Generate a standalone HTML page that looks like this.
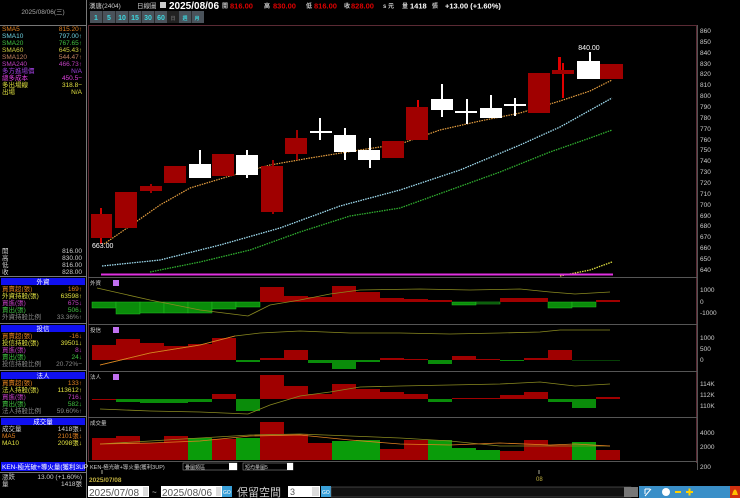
<!DOCTYPE html>
<html><head><meta charset="utf-8"><style>
body{margin:0;background:#000;width:740px;height:498px;overflow:hidden;font-family:"Liberation Sans","Noto Sans CJK TC",sans-serif;}
svg{position:absolute;left:0;top:0}
text{font-family:"Liberation Sans","Noto Sans CJK TC",sans-serif;}
.s{font-size:6.5px}
</style></head><body>
<svg width="740" height="498" viewBox="0 0 740 498">
<rect x="0" y="0" width="86" height="498" fill="#000"/>
<line x1="86.5" y1="0" x2="86.5" y2="498" stroke="#777"/>
<line x1="0" y1="25.5" x2="86" y2="25.5" stroke="#777"/>
<text x="43" y="14" fill="#aaa" class="s" text-anchor="middle">2025/08/06(三)</text>
<g class="s">
<text x="2" y="31" fill="#e08020">SMA5</text><text x="82" y="31" fill="#e08020" text-anchor="end">815.20↑</text>
<text x="2" y="38" fill="#6cd0e0">SMA10</text><text x="82" y="38" fill="#6cd0e0" text-anchor="end">797.00↑</text>
<text x="2" y="45" fill="#40c040">SMA20</text><text x="82" y="45" fill="#40c040" text-anchor="end">767.65↑</text>
<text x="2" y="52" fill="#d0d040">SMA60</text><text x="82" y="52" fill="#d0d040" text-anchor="end">645.43↑</text>
<text x="2" y="59" fill="#c08060">SMA120</text><text x="82" y="59" fill="#c08060" text-anchor="end">544.47↑</text>
<text x="2" y="66" fill="#c040c0">SMA240</text><text x="82" y="66" fill="#c040c0" text-anchor="end">466.73↑</text>
<text x="2" y="73" fill="#a040e0">多方進場價</text><text x="82" y="73" fill="#a040e0" text-anchor="end">N/A</text>
<text x="2" y="80" fill="#e040e0">總多成本</text><text x="82" y="80" fill="#e040e0" text-anchor="end">450.5−</text>
<text x="2" y="87" fill="#e0e040">多出場線</text><text x="82" y="87" fill="#e0e040" text-anchor="end">318.8−</text>
<text x="2" y="94" fill="#e0e040">出場</text><text x="82" y="94" fill="#e0e040" text-anchor="end">N/A</text>
<g fill="#ccc"><text x="2" y="253">開</text><text x="82" y="253" text-anchor="end">816.00</text>
<text x="2" y="260">高</text><text x="82" y="260" text-anchor="end">830.00</text>
<text x="2" y="267">低</text><text x="82" y="267" text-anchor="end">816.00</text>
<text x="2" y="274">收</text><text x="82" y="274" text-anchor="end">828.00</text></g>
<line x1="0" y1="276.5" x2="86" y2="276.5" stroke="#777"/>
<rect x="1" y="278" width="84" height="7" fill="#1010f0"/><text x="43" y="284" fill="#fff" text-anchor="middle">外資</text>
<text x="2" y="291" fill="#e08020">買賣超(張)</text><text x="82" y="291" fill="#e08020" text-anchor="end">169↑</text>
<text x="2" y="298" fill="#e0e040">外資持股(張)</text><text x="82" y="298" fill="#e0e040" text-anchor="end">63598↑</text>
<text x="2" y="305" fill="#c040c0">買進(張)</text><text x="82" y="305" fill="#c040c0" text-anchor="end">675↓</text>
<text x="2" y="312" fill="#40c040">賣出(張)</text><text x="82" y="312" fill="#40c040" text-anchor="end">506↓</text>
<text x="2" y="319" fill="#888">外資持股比例</text><text x="82" y="319" fill="#888" text-anchor="end">33.36%↑</text>
<line x1="0" y1="323.5" x2="86" y2="323.5" stroke="#777"/>
<rect x="1" y="325" width="84" height="7" fill="#1010f0"/><text x="43" y="331" fill="#fff" text-anchor="middle">投信</text>
<text x="2" y="338" fill="#e08020">買賣超(張)</text><text x="82" y="338" fill="#e08020" text-anchor="end">-16↓</text>
<text x="2" y="345" fill="#e0e040">投信持股(張)</text><text x="82" y="345" fill="#e0e040" text-anchor="end">39501↓</text>
<text x="2" y="352" fill="#c040c0">買進(張)</text><text x="82" y="352" fill="#c040c0" text-anchor="end">8↓</text>
<text x="2" y="359" fill="#40c040">賣出(張)</text><text x="82" y="359" fill="#40c040" text-anchor="end">24↓</text>
<text x="2" y="366" fill="#888">投信持股比例</text><text x="82" y="366" fill="#888" text-anchor="end">20.72%−</text>
<line x1="0" y1="370.5" x2="86" y2="370.5" stroke="#777"/>
<rect x="1" y="372" width="84" height="7" fill="#1010f0"/><text x="43" y="378" fill="#fff" text-anchor="middle">法人</text>
<text x="2" y="385" fill="#e08020">買賣超(張)</text><text x="82" y="385" fill="#e08020" text-anchor="end">133↑</text>
<text x="2" y="392" fill="#e0e040">法人持股(張)</text><text x="82" y="392" fill="#e0e040" text-anchor="end">113612↑</text>
<text x="2" y="399" fill="#c040c0">買進(張)</text><text x="82" y="399" fill="#c040c0" text-anchor="end">716↓</text>
<text x="2" y="406" fill="#40c040">賣出(張)</text><text x="82" y="406" fill="#40c040" text-anchor="end">582↓</text>
<text x="2" y="413" fill="#888">法人持股比例</text><text x="82" y="413" fill="#888" text-anchor="end">59.60%↑</text>
<line x1="0" y1="416.5" x2="86" y2="416.5" stroke="#777"/>
<rect x="1" y="418" width="84" height="7" fill="#1010f0"/><text x="43" y="424" fill="#fff" text-anchor="middle">成交量</text>
<text x="2" y="431" fill="#ccc">成交量</text><text x="82" y="431" fill="#ccc" text-anchor="end">1418張↓</text>
<text x="2" y="438" fill="#e08020">MA5</text><text x="82" y="438" fill="#e08020" text-anchor="end">2101張↓</text>
<text x="2" y="445" fill="#e0e040">MA10</text><text x="82" y="445" fill="#e0e040" text-anchor="end">2098張↓</text>
<rect x="1" y="462" width="84" height="9" fill="#1010f0"/><text x="2" y="469" fill="#fff">KEN-極光破+導火量(獲利3UP)</text>
<line x1="0" y1="472.5" x2="86" y2="472.5" stroke="#777"/>
<text x="2" y="479" fill="#ccc">漲跌</text><text x="82" y="479" fill="#ccc" text-anchor="end">13.00 (+1.60%)</text>
<text x="2" y="486" fill="#ccc">量</text><text x="82" y="486" fill="#ccc" text-anchor="end">1418張</text>
</g>

<g class="s">
<text x="89" y="8" fill="#ccc">漢唐(2404)</text>
<text x="137" y="8" fill="#ccc">日線圖</text>
<rect x="160" y="2" width="6" height="6" fill="#ccc"/>
</g>
<text x="169" y="9" fill="#fff" font-size="10" font-weight="bold">2025/08/06</text>
<g font-size="6" font-weight="bold">
<text x="222" y="8" fill="#ccc">開</text><text x="230" y="8.5" fill="#e00000" font-size="7.5">816.00</text>
<text x="264" y="8" fill="#ccc">高</text><text x="273" y="8.5" fill="#e00000" font-size="7.5">830.00</text>
<text x="306" y="8" fill="#ccc">低</text><text x="314" y="8.5" fill="#e00000" font-size="7.5">816.00</text>
<text x="344" y="8" fill="#ccc">收</text><text x="351" y="8.5" fill="#e00000" font-size="7.5">828.00</text>
<text x="383" y="8" fill="#ccc">s 元</text><text x="402" y="8" fill="#ccc">量</text>
<text x="410" y="8.5" fill="#fff" font-size="7.5">1418</text><text x="432" y="8" fill="#ccc">張</text>
<text x="445" y="8.5" fill="#fff" font-size="7.5">+13.00 (+1.60%)</text>
</g>
<g font-size="7" font-weight="bold" fill="#3cd8e0">
<rect x="90" y="11" width="114" height="12" fill="#4a525a"/>
<rect x="167" y="11" width="12" height="12" fill="#222"/>
<g stroke="#222" stroke-width="0.8"><line x1="102.5" y1="11" x2="102.5" y2="23"/><line x1="115.5" y1="11" x2="115.5" y2="23"/><line x1="128.5" y1="11" x2="128.5" y2="23"/><line x1="141.5" y1="11" x2="141.5" y2="23"/><line x1="154.5" y1="11" x2="154.5" y2="23"/><line x1="191.5" y1="11" x2="191.5" y2="23"/></g>
<text x="96" y="20" text-anchor="middle">1</text><text x="109" y="20" text-anchor="middle">5</text><text x="122" y="20" text-anchor="middle">10</text><text x="135" y="20" text-anchor="middle">15</text><text x="148" y="20" text-anchor="middle">30</text><text x="161" y="20" text-anchor="middle">60</text>
<text x="173" y="20" text-anchor="middle" fill="#666" font-size="5">日</text><text x="185" y="20" text-anchor="middle" font-size="5">週</text><text x="197" y="20" text-anchor="middle" font-size="5">月</text>
</g>

<rect x="88.5" y="25.5" width="608" height="437" fill="none" stroke="#5a2a34"/>
<g stroke="#555"><line x1="88" y1="277.5" x2="697" y2="277.5"/><line x1="88" y1="324.5" x2="697" y2="324.5"/><line x1="88" y1="371.5" x2="697" y2="371.5"/><line x1="88" y1="417.5" x2="697" y2="417.5"/><line x1="88" y1="461.5" x2="697" y2="461.5"/></g>
<line x1="697.5" y1="25" x2="697.5" y2="470" stroke="#555"/>

<g fill="#ccc" font-size="6.5">
<text x="700" y="33">860</text><text x="700" y="44">850</text><text x="700" y="55">840</text><text x="700" y="66">830</text><text x="700" y="76">820</text><text x="700" y="87">810</text><text x="700" y="98">800</text><text x="700" y="109">790</text><text x="700" y="120">780</text><text x="700" y="131">770</text><text x="700" y="142">760</text><text x="700" y="152">750</text><text x="700" y="163">740</text><text x="700" y="174">730</text><text x="700" y="185">720</text><text x="700" y="196">710</text><text x="700" y="207">700</text><text x="700" y="218">690</text><text x="700" y="228">680</text><text x="700" y="239">670</text><text x="700" y="250">660</text><text x="700" y="261">650</text><text x="700" y="272">640</text>
<text x="700" y="292">1000</text><text x="700" y="304">0</text><text x="700" y="315">-1000</text>
<text x="700" y="340">1000</text><text x="700" y="351">500</text><text x="700" y="362">0</text>
<text x="700" y="386">114K</text><text x="700" y="397">112K</text><text x="700" y="408">110K</text>
<text x="700" y="435">4000</text><text x="700" y="449">2000</text><text x="700" y="469">200</text>
</g>

<polyline points="102,266 160,260 220,245 280,228 340,206 400,190 460,170 520,145 560,127 612,98" fill="none" stroke="#9fdcf0" stroke-width="1.3" stroke-dasharray="1.5,1"/>
<polyline points="104,244 130,226 160,205 190,188 230,176 270,165 310,158 360,150 400,144 440,130 480,121 520,113 560,101 590,91 612,80" fill="none" stroke="#e8a040" stroke-width="1.2" stroke-dasharray="1.5,1"/>
<polyline points="150,272 200,262 250,250 300,232 350,216 400,208 450,190 500,172 550,152 590,138 612,130" fill="none" stroke="#30b030" stroke-width="1.3" stroke-dasharray="1.5,1"/>
<polyline points="560,276 590,270 612,262" fill="none" stroke="#e0e040" stroke-width="1.3" stroke-dasharray="1.5,1"/>
<line x1="101" y1="274.5" x2="613" y2="274.5" stroke="#e030e0" stroke-width="2"/>

<g fill="#a00000">
<rect x="100" y="208" width="2" height="36" fill="#d00000"/><rect x="91" y="214" width="21" height="24"/>
<rect x="115" y="192" width="22" height="36"/>
<rect x="150" y="184" width="2" height="9"/><rect x="140" y="186" width="22" height="5"/>
<rect x="164" y="166" width="22" height="17"/>
<rect x="212" y="154" width="22" height="22"/>
<rect x="272" y="160" width="2" height="54"/><rect x="261" y="166" width="22" height="46"/>
<rect x="296" y="130" width="2" height="30"/><rect x="285" y="138" width="22" height="16"/>
<rect x="382" y="141" width="22" height="17"/>
<rect x="417" y="100" width="2" height="10" fill="#e00000"/><rect x="406" y="107" width="22" height="33"/>
<rect x="558" y="57" width="3" height="17" fill="#e00000"/><rect x="528" y="73" width="22" height="40"/>
<rect x="562" y="63" width="2" height="35" fill="#e00000"/><rect x="552" y="70" width="22" height="4"/>
<rect x="600" y="64" width="23" height="15"/>
</g>
<g fill="#fff">
<rect x="199" y="150" width="2" height="28"/><rect x="189" y="164" width="22" height="14"/>
<rect x="246" y="150" width="2" height="28"/><rect x="236" y="155" width="22" height="20"/>
<rect x="319" y="118" width="2" height="22"/><rect x="310" y="131" width="22" height="2"/>
<rect x="344" y="128" width="2" height="32"/><rect x="334" y="135" width="22" height="17"/>
<rect x="369" y="138" width="2" height="30"/><rect x="358" y="150" width="22" height="10"/>
<rect x="441" y="84" width="2" height="33"/><rect x="431" y="99" width="22" height="11"/>
<rect x="466" y="99" width="2" height="25"/><rect x="455" y="111" width="22" height="2"/>
<rect x="490" y="95" width="2" height="23"/><rect x="480" y="108" width="22" height="10"/>
<rect x="514" y="98" width="2" height="18"/><rect x="504" y="104" width="22" height="2"/>
<rect x="589" y="52" width="2" height="10"/><rect x="577" y="61" width="23" height="18"/>
</g>
<text x="589" y="50" fill="#fff" font-size="7" text-anchor="middle">840.00</text>
<text x="92" y="248" fill="#fff" font-size="7">663.00</text>

<g font-size="5.5" fill="#ccc"><text x="90" y="285">外資</text><text x="90" y="332">投信</text><text x="90" y="379">法人</text><text x="90" y="425">成交量</text></g>
<g fill="#c070f0"><rect x="113" y="280" width="6" height="6"/><rect x="113" y="327" width="6" height="6"/><rect x="113" y="374" width="6" height="6"/></g>

<g fill="#0a8c0a" stroke="#20c020" stroke-width="0.5">
<rect x="92" y="302" width="24" height="6"/><rect x="116" y="302" width="24" height="12"/><rect x="140" y="302" width="24" height="11"/><rect x="164" y="302" width="24" height="11"/><rect x="188" y="302" width="24" height="11"/><rect x="212" y="302" width="24" height="7"/><rect x="236" y="302" width="24" height="5"/>
<rect x="452" y="302" width="24" height="3"/><rect x="476" y="302" width="24" height="2" fill="#064006"/><rect x="548" y="302" width="24" height="6"/><rect x="572" y="302" width="24" height="5"/>
</g>
<g fill="#a00000">
<rect x="260" y="287" width="24" height="15"/><rect x="284" y="296" width="24" height="6"/><rect x="308" y="297" width="24" height="5"/><rect x="332" y="286" width="24" height="16"/><rect x="356" y="292" width="24" height="10"/><rect x="380" y="298" width="24" height="4"/><rect x="404" y="299" width="24" height="3"/><rect x="428" y="300" width="24" height="2"/><rect x="500" y="298" width="24" height="4"/><rect x="524" y="298" width="24" height="4"/><rect x="596" y="300" width="24" height="2"/>
</g>
<polyline points="97,288 150,300 200,310 248,316 270,305 300,300 330,294 360,290 420,289 470,290 520,289 550,292 575,294 610,292" fill="none" stroke="#8a8a20" stroke-width="0.8"/>

<g fill="#a00000">
<rect x="92" y="345" width="24" height="15"/><rect x="116" y="339" width="24" height="21"/><rect x="140" y="343" width="24" height="17"/><rect x="164" y="346" width="24" height="14"/><rect x="188" y="344" width="24" height="16"/><rect x="212" y="338" width="24" height="22"/>
<rect x="260" y="358" width="24" height="2"/><rect x="284" y="350" width="24" height="10"/><rect x="380" y="358" width="24" height="2"/><rect x="404" y="359" width="24" height="1"/><rect x="452" y="356" width="24" height="4"/><rect x="476" y="359" width="24" height="1"/><rect x="524" y="358" width="24" height="2"/><rect x="548" y="350" width="24" height="10"/>
</g>
<g fill="#0a8c0a">
<rect x="236" y="360" width="24" height="2"/><rect x="308" y="360" width="24" height="3"/><rect x="332" y="360" width="24" height="9"/><rect x="356" y="360" width="24" height="2"/><rect x="428" y="360" width="24" height="4"/><rect x="500" y="360" width="24" height="1"/><rect x="572" y="360" width="48" height="1" fill="#064006"/>
</g>
<polyline points="100,365 150,353 200,345 235,336 260,333 300,331 350,333 400,333 450,334 500,333 540,332 560,330 610,330" fill="none" stroke="#8a8a20" stroke-width="0.8"/>
<polyline points="100,365 150,353 200,345 235,336" fill="none" stroke="#e08020" stroke-width="0.8"/>

<g fill="#a00000">
<rect x="92" y="399" width="24" height="1"/><rect x="212" y="394" width="24" height="5"/><rect x="260" y="375" width="24" height="24"/><rect x="284" y="386" width="24" height="13"/><rect x="308" y="394" width="24" height="5"/><rect x="332" y="384" width="24" height="15"/><rect x="356" y="389" width="24" height="10"/><rect x="380" y="392" width="24" height="7"/><rect x="404" y="394" width="24" height="5"/><rect x="452" y="398" width="48" height="1"/><rect x="500" y="395" width="24" height="4"/><rect x="524" y="392" width="24" height="7"/><rect x="596" y="397" width="24" height="2"/>
</g>
<g fill="#0a8c0a">
<rect x="116" y="399" width="24" height="3"/><rect x="140" y="399" width="48" height="4"/><rect x="188" y="399" width="24" height="3"/><rect x="236" y="399" width="24" height="12"/><rect x="428" y="399" width="24" height="3"/><rect x="548" y="399" width="24" height="3"/><rect x="572" y="399" width="24" height="9"/>
</g>
<polyline points="100,409 150,411 200,412 248,414 270,405 300,396 330,392 360,387 400,386 450,385 500,384 540,382 575,386 610,384" fill="none" stroke="#8a8a20" stroke-width="0.8"/>

<g fill="#a00000">
<rect x="92" y="438" width="24" height="22"/><rect x="116" y="436" width="24" height="24"/><rect x="140" y="443" width="24" height="17"/><rect x="164" y="436" width="24" height="24"/><rect x="212" y="439" width="24" height="21"/><rect x="260" y="422" width="24" height="38"/><rect x="284" y="434" width="24" height="26"/><rect x="308" y="443" width="24" height="17"/><rect x="380" y="449" width="24" height="11"/><rect x="404" y="440" width="24" height="20"/><rect x="500" y="451" width="24" height="9"/><rect x="524" y="440" width="24" height="20"/><rect x="548" y="445" width="24" height="15"/><rect x="596" y="450" width="24" height="10"/>
</g>
<g fill="#0a9c0a">
<rect x="188" y="438" width="24" height="22"/><rect x="236" y="438" width="24" height="22"/><rect x="332" y="441" width="24" height="19"/><rect x="356" y="440" width="24" height="20"/><rect x="428" y="440" width="24" height="20"/><rect x="452" y="448" width="24" height="12"/><rect x="476" y="450" width="24" height="10"/><rect x="572" y="442" width="24" height="18"/>
</g>
<polyline points="100,444 150,441 200,438 250,435 300,434 350,436 400,438 450,441 500,446 550,446 610,446" fill="none" stroke="#8a8a20" stroke-width="0.8"/>
<polyline points="100,444 150,443 200,441 250,436 300,435 350,440 400,444 450,445 500,443 550,445 575,444 610,446" fill="none" stroke="#e08020" stroke-width="0.8"/>

<rect x="88" y="462" width="608" height="9" fill="#000"/>
<g font-size="5.5" fill="#ccc"><text x="90" y="469">KEN-極光破+導火量(獲利3UP)</text></g>
<rect x="183" y="463" width="54" height="7" fill="#000" stroke="#aaa" stroke-width="0.5"/><text x="185" y="469" font-size="5" fill="#ccc">疊圖類區</text><rect x="229" y="463" width="8" height="7" fill="#fff"/>
<rect x="243" y="463" width="50" height="7" fill="#000" stroke="#aaa" stroke-width="0.5"/><text x="245" y="469" font-size="5" fill="#ccc">短均量圖5</text><rect x="287" y="463" width="6" height="7" fill="#fff"/>
<line x1="102" y1="470" x2="102" y2="474" stroke="#aa9"/><text x="89" y="482" fill="#c0b040" font-size="6.5" font-weight="bold">2025/07/08</text>
<line x1="539" y1="470" x2="539" y2="474" stroke="#aa9"/><text x="536" y="481" fill="#c0b040" font-size="6">08</text>
<rect x="88" y="486" width="652" height="12" fill="#000"/>
<rect x="88" y="486" width="61" height="11" fill="#fff"/><text x="89" y="496" font-family="Liberation Serif" font-size="10" fill="#555">2025/07/08</text><rect x="143" y="487" width="5" height="9" fill="#ddd"/>
<text x="152" y="495" fill="#ccc" font-size="8">~</text>
<rect x="161" y="486" width="61" height="11" fill="#fff"/><text x="162" y="496" font-family="Liberation Serif" font-size="10" fill="#555">2025/08/06</text><rect x="216" y="487" width="5" height="9" fill="#ddd"/>
<rect x="222" y="486" width="10" height="11" fill="#3aa0d8"/><text x="223" y="494" font-size="5" fill="#fff">GO</text>
<text x="237" y="496" fill="#ccc" font-size="11" font-family="Liberation Serif,Noto Serif CJK SC">保留空間</text>
<rect x="288" y="486" width="32" height="11" fill="#fff"/><text x="290" y="495" font-size="9" fill="#555">3</text><rect x="312" y="487" width="7" height="9" fill="#ddd"/>
<rect x="321" y="486" width="10" height="11" fill="#3aa0d8"/><text x="322" y="494" font-size="5" fill="#fff">GO</text>
<rect x="331" y="487" width="300" height="10" fill="#111" stroke="#777" stroke-width="0.5"/>
<rect x="624" y="487" width="14" height="10" fill="#777"/>
<rect x="639" y="486" width="101" height="12" fill="#3a8fc8"/>
<g fill="#fff"><circle cx="666" cy="492" r="4"/><rect x="675" y="491" width="6" height="2" fill="#ffd000"/><rect x="686" y="491" width="7" height="2" fill="#ffd000"/><rect x="688.5" y="488.5" width="2" height="7" fill="#ffd000"/></g>
<path d="M645 496 L651 489 M645 489 L645 494 M645 489 L650 489" stroke="#fff" stroke-width="1" fill="none"/>
<rect x="730" y="486" width="10" height="12" fill="#d03010"/><path d="M732 495 L738 495 L737 492 Q735 487 733 492 Z" fill="#ffc000"/>
</svg>
</body></html>
